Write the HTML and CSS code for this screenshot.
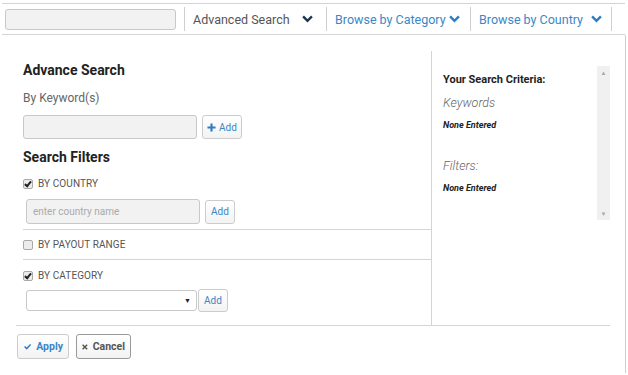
FILE: index.html
```html
<!DOCTYPE html>
<html lang="en">
<head>
  <meta charset="UTF-8" />
  <title>Advance Search</title>
  <link rel="stylesheet" href="styles.css">
</head>
<body>
  <header class="topbar">
    <input class="quick-search" type="text" />
    <div class="nav-item nav-dark">
      <span>Advanced Search</span>
      <svg class="chev" viewBox="0 0 10 7" width="11" height="8"><path d="M1 1.2 L5 5.2 L9 1.2" fill="none" stroke="currentColor" stroke-width="2.2"/></svg>
    </div>
    <div class="nav-item nav-blue nav-cat">
      <span>Browse by Category</span>
      <svg class="chev" viewBox="0 0 10 7" width="11" height="8"><path d="M1 1.2 L5 5.2 L9 1.2" fill="none" stroke="currentColor" stroke-width="2.2"/></svg>
    </div>
    <div class="nav-item nav-blue nav-country">
      <span>Browse by Country</span>
      <svg class="chev" viewBox="0 0 10 7" width="11" height="8"><path d="M1 1.2 L5 5.2 L9 1.2" fill="none" stroke="currentColor" stroke-width="2.2"/></svg>
    </div>
  </header>

  <section class="panel">
    <div class="columns">
      <div class="search-col">
        <h2>Advance Search</h2>
        <div class="label">By Keyword(s)</div>
        <div class="field-row kw-row">
          <input class="text-input kw-input" type="text" />
          <button class="btn add-btn">
            <svg viewBox="0 0 10 10" width="9" height="9"><path d="M5 0.5 V9.5 M0.5 5 H9.5" stroke="#2f7bc4" stroke-width="2.4"/></svg>
            Add
          </button>
        </div>
        <h2 class="filters-title">Search Filters</h2>

        <div class="filter">
          <label class="check-row"><span class="check on"></span>BY COUNTRY</label>
          <div class="field-row">
            <input class="text-input country-input" type="text" placeholder="enter country name" />
            <button class="btn add-btn">Add</button>
          </div>
        </div>
        <div class="filter filter-plain">
          <label class="check-row"><span class="check"></span>BY PAYOUT RANGE</label>
        </div>
        <div class="filter filter-last">
          <label class="check-row"><span class="check on"></span>BY CATEGORY</label>
          <div class="field-row">
            <div class="select-box"><span class="caret">&#9660;</span></div>
            <button class="btn add-btn add-tight">Add</button>
          </div>
        </div>
      </div>

      <aside class="criteria-col">
        <div class="criteria">
          <h3>Your Search Criteria:</h3>
          <div class="crit-head">Keywords</div>
          <div class="crit-none">None Entered</div>
          <div class="crit-head crit-filters">Filters:</div>
          <div class="crit-none">None Entered</div>
        </div>
        <div class="scroll">
          <span class="arrow">&#9650;</span>
          <span class="arrow">&#9660;</span>
        </div>
      </aside>
    </div>

    <div class="actions">
      <button class="btn apply-btn">
        <svg viewBox="0 0 12 10" width="11" height="9"><path d="M1 5 L4.5 8.5 L11 1.5" fill="none" stroke="#2f7bc4" stroke-width="2.4"/></svg>
        Apply
      </button>
      <button class="btn cancel-btn">
        <svg viewBox="0 0 10 10" width="8" height="8"><path d="M1 1 L9 9 M9 1 L1 9" stroke="#555" stroke-width="2.6"/></svg>
        Cancel
      </button>
    </div>
  </section>
</body>
</html>
```

FILE: styles.css
```css
body {
  font-family: Roboto, 'Liberation Sans', sans-serif;
  margin: 0;
  padding: 0;
  background: #ffffff;
  color: #333;
  width: 628px;
  height: 375px;
  overflow: hidden;
}

.topbar {
  display: flex;
  align-items: center;
  margin: 3px 0 0 2px;
  width: 623px;
  height: 32px;
  border-top: 1px solid #d4d4d4;
  border-bottom: 1px solid #d4d4d4;
  box-sizing: border-box;
}
.quick-search {
  width: 171px;
  height: 21px;
  margin-left: 3px;
  box-sizing: border-box;
  background: #f2f2f2;
  border: 1px solid #c8c8c8;
  border-radius: 3px;
}
.nav-item {
  display: flex;
  align-items: center;
  height: 24px;
  border-left: 1px solid #cfcfcf;
  font-size: 12.5px;
  padding-left: 8px;
  box-sizing: border-box;
}
.nav-dark {
  margin-left: 8px;
  width: 142px;
  color: #555;
}
.nav-dark .chev {
  margin-left: 12px;
  color: #1d3552;
}
.nav-blue {
  color: #3a87c8;
}
.nav-cat {
  width: 144px;
}
.nav-cat .chev {
  margin-left: 3px;
  color: #2e7cc2;
}
.nav-country {
  width: 142px;
  border-right: 1px solid #cfcfcf;
}
.nav-country .chev {
  margin-left: 8px;
  color: #2e7cc2;
}

.panel {
  margin-left: 2px;
  width: 624px;
  height: 338px;
  border-right: 1px solid #cfcfcf;
  box-sizing: border-box;
  padding: 16px 15px 0 14px;
}
.columns {
  display: flex;
  height: 274px;
}
.search-col {
  width: 416px;
  border-right: 1px solid #d4d4d4;
  padding-left: 7px;
  box-sizing: border-box;
}
h2 {
  font-size: 14px;
  font-weight: 700;
  color: #222;
  line-height: 18px;
  margin: 10px 0 0;
}
.label {
  font-size: 12px;
  color: #666;
  line-height: 16px;
  margin-top: 11px;
}
.field-row {
  display: flex;
  align-items: center;
}
.kw-row {
  margin-top: 9px;
}
.text-input {
  height: 24px;
  box-sizing: border-box;
  background: #f2f2f2;
  border: 1px solid #c8c8c8;
  border-radius: 3px;
  font-family: inherit;
}
.kw-input {
  width: 174px;
}
.btn {
  display: flex;
  align-items: center;
  gap: 4px;
  background: linear-gradient(#ffffff, #f3f3f3);
  border: 1px solid #cccccc;
  border-radius: 3px;
  font-family: inherit;
  color: #3a87c8;
  cursor: pointer;
}
.add-btn {
  height: 24px;
  margin-left: 5px;
  padding: 0 5px 0 5px;
  font-size: 10px;
}
.kw-row .add-btn {
  gap: 3px;
  padding: 0 4px 0 4px;
}
.add-tight {
  margin-left: 1px;
  height: 23px;
}
.filters-title {
  margin-top: 9px;
}

.filter {
  border-bottom: 1px solid #d4d4d4;
  padding: 11px 0 5px;
}
.filter-plain {
  padding: 8px 0 7px;
}
.filter-last {
  border-bottom: none;
  padding: 9px 0 0;
}
.check-row {
  display: flex;
  align-items: center;
  font-size: 10px;
  color: #555;
  line-height: 14px;
  letter-spacing: 0.1px;
}
.check {
  width: 8px;
  height: 8px;
  border: 1px solid #a9a9a9;
  border-radius: 2px;
  background: #ececec;
  margin-right: 5px;
  position: relative;
}
.check.on::after {
  content: "";
  position: absolute;
  left: 2px;
  top: 0;
  width: 2px;
  height: 5px;
  border: solid #222;
  border-width: 0 2px 2px 0;
  transform: rotate(40deg);
}
.filter .field-row {
  margin: 8px 0 0 3px;
}
.filter-last .field-row {
  margin-top: 6px;
}
.country-input {
  width: 174px;
  height: 25px;
  padding-left: 6px;
  font-size: 10px;
}
.country-input::placeholder {
  color: #aaa;
}
.select-box {
  width: 171px;
  height: 21px;
  border: 1px solid #c8c8c8;
  border-radius: 3px;
  display: flex;
  align-items: center;
  justify-content: flex-end;
  box-sizing: border-box;
}
.caret {
  font-size: 7px;
  color: #222;
  margin-right: 5px;
}

.criteria-col {
  flex: 1;
  display: flex;
  padding: 15px 0 0 11px;
}
.criteria {
  flex: 1;
}
h3 {
  font-size: 11px;
  font-weight: 700;
  color: #222;
  margin: 7px 0 0;
  line-height: 14px;
}
.crit-head {
  font-size: 12.5px;
  font-style: italic;
  font-weight: 300;
  color: #666;
  margin-top: 8px;
  line-height: 16px;
}
.crit-none {
  font-size: 9px;
  font-weight: 700;
  font-style: italic;
  color: #222;
  margin-top: 9px;
}
.crit-filters {
  margin-top: 28px;
}
.scroll {
  width: 13px;
  height: 154px;
  background: #f0f0f0;
  display: flex;
  flex-direction: column;
  justify-content: space-between;
  align-items: center;
  padding: 3px 0;
  box-sizing: border-box;
}
.arrow {
  font-size: 6px;
  color: #a8a8a8;
}

.actions {
  display: flex;
  gap: 7px;
  border-top: 1px solid #d4d4d4;
  padding: 8px 0 0 1px;
}
.apply-btn, .cancel-btn {
  height: 25px;
  font-size: 10.5px;
  font-weight: 700;
  padding: 0 5px 0 5px;
  gap: 5px;
}
.apply-btn {
  width: 52px;
  padding-left: 6px;
}
.cancel-btn {
  width: 55px;
  color: #555;
  border-color: #999;
}
```
